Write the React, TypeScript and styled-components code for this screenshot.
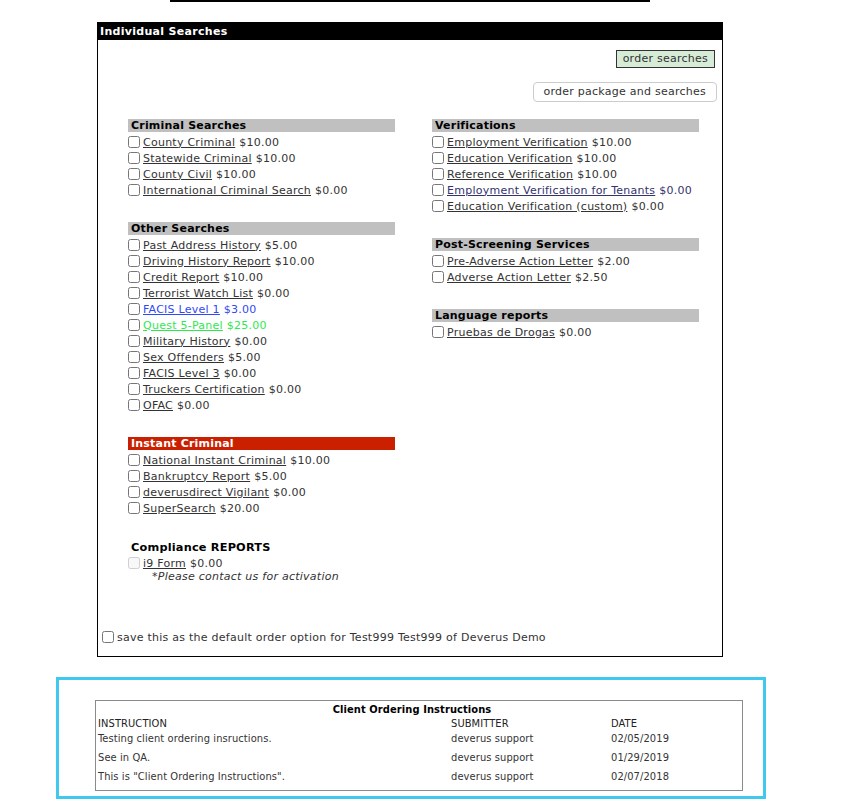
import React from 'react';
import styled, { createGlobalStyle } from 'styled-components';

const GlobalStyle = createGlobalStyle`
  html, body {
    margin: 0;
    padding: 0;
    background: #fff;
  }
  body {
    font-family: "DejaVu Sans", Verdana, sans-serif;
    font-size: 11px;
    letter-spacing: 0.25px;
    color: #333;
  }
`;

const Page = styled.div`
  width: 846px;
  padding-bottom: 12px;
`;

const TopRule = styled.div`
  width: 480px;
  height: 2px;
  margin-left: 170px;
  background: #000;
`;

const Panel = styled.div`
  width: 624px;
  margin: 20px 0 0 97px;
  border: 1px solid #000;
  border-top: none;
  background: #fff;
`;

const PanelHeader = styled.div`
  height: 18px;
  line-height: 20px;
  background: #000;
  color: #fff;
  font-weight: bold;
  font-size: 11px;
  letter-spacing: 0.3px;
  padding-left: 2px;
`;

const ButtonStack = styled.div`
  display: flex;
  flex-direction: column;
  align-items: flex-end;
  padding: 10px 6px 0 0;
`;

const OrderButton = styled.button`
  height: 18px;
  padding: 0 6px;
  margin-right: 1px;
  background: #d7ecd7;
  border: 1px solid #333;
  border-radius: 0;
  color: #333;
  font-family: "DejaVu Sans", Verdana, sans-serif;
  font-size: 11px;
  letter-spacing: 0.25px;
  line-height: 16px;
`;

const PackageButton = styled.button`
  height: 20px;
  margin-top: 14px;
  margin-right: -1px;
  padding: 0 10px;
  background: #fff;
  border: 1px solid #ccc;
  border-radius: 4px;
  color: #333;
  font-family: "DejaVu Sans", Verdana, sans-serif;
  font-size: 11px;
  letter-spacing: 0.25px;
  line-height: 18px;
`;

const Columns = styled.div`
  display: grid;
  grid-template-columns: 304px 267px;
  padding: 17px 0 0 30px;
  align-items: start;
`;

const Column = styled.div`
  display: flex;
  flex-direction: column;
  gap: 24px;
`;

const Group = styled.div`
  width: 267px;
`;

const GroupTitle = styled.div<{ $red?: boolean }>`
  height: 13px;
  line-height: 14px;
  margin-bottom: 2px;
  padding-left: 3px;
  background: ${p => (p.$red ? '#cb2000' : '#c0c0c0')};
  color: ${p => (p.$red ? '#fff' : '#000')};
  font-weight: bold;
  font-size: 11px;
  letter-spacing: 0.2px;
`;

const PlainTitle = styled.div`
  height: 15px;
  line-height: 15px;
  padding-left: 3px;
  color: #000;
  font-weight: bold;
  font-size: 11.3px;
  letter-spacing: 0.2px;
`;

const Row = styled.label`
  display: flex;
  align-items: center;
  height: 16px;
  white-space: nowrap;
`;

const Check = styled.input.attrs({ type: 'checkbox' })`
  width: 12px;
  height: 12px;
  margin: 0 3px 0 0;
  flex: none;
`;

const ItemLink = styled.a<{ $color?: string }>`
  color: ${p => p.$color || '#333'};
  text-decoration: underline;
  margin-right: 4px;
`;

const Price = styled.span<{ $color?: string }>`
  color: ${p => p.$color || '#333'};
`;

const Note = styled.div`
  padding-left: 24px;
  height: 12px;
  line-height: 12px;
  font-style: italic;
  color: #333;
`;

const SaveRow = styled.label`
  display: flex;
  align-items: center;
  height: 16px;
  margin: 46px 0 0 4px;
  padding-bottom: 11px;
  box-sizing: content-box;
`;

const InstructionsBox = styled.div`
  width: 648px;
  margin: 20px 0 0 56px;
  padding: 20px 20px 5px 36px;
  border: 3px solid #41c8ef;
  background: #fff;
`;

const InstructionsTable = styled.div`
  border: 1px solid #8a8a8a;
  padding: 0 0 4px 2px;
  font-family: "DejaVu Sans Condensed", Tahoma, "Liberation Sans", sans-serif;
  font-size: 11px;
  letter-spacing: 0.1px;
  color: #333;
`;

const TableTitle = styled.div`
  height: 14px;
  line-height: 14px;
  margin-top: 2px;
  padding-right: 16px;
  text-align: center;
  font-weight: bold;
  color: #000;
`;

const TableRow = styled.div<{ $head?: boolean }>`
  display: grid;
  grid-template-columns: 353px 160px 1fr;
  height: ${p => (p.$head ? '12px' : '19px')};
  align-items: center;
  color: ${p => (p.$head ? '#222' : '#333')};
`;

type Item = { name: string; price: string; color?: string };

const criminal: Item[] = [
  { name: 'County Criminal', price: '$10.00' },
  { name: 'Statewide Criminal', price: '$10.00' },
  { name: 'County Civil', price: '$10.00' },
  { name: 'International Criminal Search', price: '$0.00' },
];

const other: Item[] = [
  { name: 'Past Address History', price: '$5.00' },
  { name: 'Driving History Report', price: '$10.00' },
  { name: 'Credit Report', price: '$10.00' },
  { name: 'Terrorist Watch List', price: '$0.00' },
  { name: 'FACIS Level 1', price: '$3.00', color: '#3049f5' },
  { name: 'Quest 5-Panel', price: '$25.00', color: '#2ee84e' },
  { name: 'Military History', price: '$0.00' },
  { name: 'Sex Offenders', price: '$5.00' },
  { name: 'FACIS Level 3', price: '$0.00' },
  { name: 'Truckers Certification', price: '$0.00' },
  { name: 'OFAC', price: '$0.00' },
];

const instant: Item[] = [
  { name: 'National Instant Criminal', price: '$10.00' },
  { name: 'Bankruptcy Report', price: '$5.00' },
  { name: 'deverusdirect Vigilant', price: '$0.00' },
  { name: 'SuperSearch', price: '$20.00' },
];

const verifications: Item[] = [
  { name: 'Employment Verification', price: '$10.00' },
  { name: 'Education Verification', price: '$10.00' },
  { name: 'Reference Verification', price: '$10.00' },
  { name: 'Employment Verification for Tenants', price: '$0.00', color: '#33336e' },
  { name: 'Education Verification (custom)', price: '$0.00' },
];

const postScreening: Item[] = [
  { name: 'Pre-Adverse Action Letter', price: '$2.00' },
  { name: 'Adverse Action Letter', price: '$2.50' },
];

const language: Item[] = [{ name: 'Pruebas de Drogas', price: '$0.00' }];

const instructions = [
  { text: 'Testing client ordering insructions.', by: 'deverus support', date: '02/05/2019' },
  { text: 'See in QA.', by: 'deverus support', date: '01/29/2019' },
  { text: 'This is "Client Ordering Instructions".', by: 'deverus support', date: '02/07/2018' },
];

const ItemRow = ({ item }: { item: Item }) => (
  <Row>
    <Check />
    <ItemLink $color={item.color}>{item.name}</ItemLink>
    <Price $color={item.color}>{item.price}</Price>
  </Row>
);

const SearchGroup = ({ title, items, red }: { title: string; items: Item[]; red?: boolean }) => (
  <Group>
    <GroupTitle $red={red}>{title}</GroupTitle>
    {items.map(i => (
      <ItemRow key={i.name} item={i} />
    ))}
  </Group>
);

export default function App() {
  return (
    <Page>
      <GlobalStyle />
      <TopRule />
      <Panel>
        <PanelHeader>Individual Searches</PanelHeader>
        <ButtonStack>
          <OrderButton>order searches</OrderButton>
          <PackageButton>order package and searches</PackageButton>
        </ButtonStack>
        <Columns>
          <Column>
            <SearchGroup title="Criminal Searches" items={criminal} />
            <SearchGroup title="Other Searches" items={other} />
            <SearchGroup title="Instant Criminal" items={instant} red />
            <Group>
              <PlainTitle>Compliance REPORTS</PlainTitle>
              <Row>
                <Check disabled />
                <ItemLink>i9 Form</ItemLink>
                <Price>$0.00</Price>
              </Row>
              <Note>*Please contact us for activation</Note>
            </Group>
          </Column>
          <Column>
            <SearchGroup title="Verifications" items={verifications} />
            <SearchGroup title="Post-Screening Services" items={postScreening} />
            <SearchGroup title="Language reports" items={language} />
          </Column>
        </Columns>
        <SaveRow>
          <Check />
          save this as the default order option for Test999 Test999 of Deverus Demo
        </SaveRow>
      </Panel>
      <InstructionsBox>
        <InstructionsTable>
          <TableTitle>Client Ordering Instructions</TableTitle>
          <TableRow $head>
            <span>INSTRUCTION</span>
            <span>SUBMITTER</span>
            <span>DATE</span>
          </TableRow>
          {instructions.map(r => (
            <TableRow key={r.text}>
              <span>{r.text}</span>
              <span>{r.by}</span>
              <span>{r.date}</span>
            </TableRow>
          ))}
        </InstructionsTable>
      </InstructionsBox>
    </Page>
  );
}
